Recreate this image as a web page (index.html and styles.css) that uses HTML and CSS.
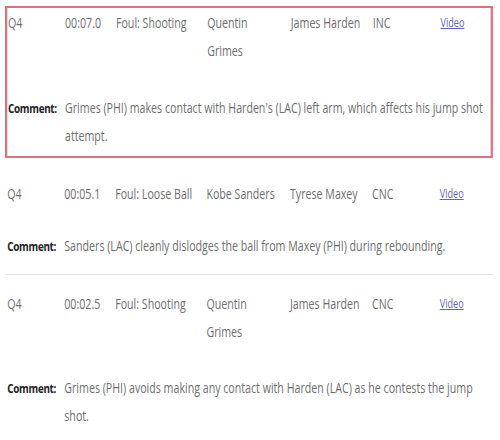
FILE: index.html
```html
<!DOCTYPE html>
<html>
<head>
<meta charset="utf-8">
<link rel="stylesheet" href="styles.css">
</head>
<body>
<div class="page">
<div class="list">
  <div class="entry entry-active">
    <div class="head">
      <span>Q4</span>
      <span>00:07.0</span>
      <span>Foul: Shooting</span>
      <span class="name">Quentin Grimes</span>
      <span>James Harden</span>
      <span>INC</span>
      <a class="video" href="#">Video</a>
    </div>
    <div class="comment">
      <span class="label">Comment:</span>
      <span class="text">Grimes (PHI) makes contact with Harden's (LAC) left arm, which affects his jump shot attempt.</span>
    </div>
  </div>
  <div class="entry entry-second">
    <div class="head">
      <span>Q4</span>
      <span>00:05.1</span>
      <span>Foul: Loose Ball</span>
      <span class="name">Kobe Sanders</span>
      <span>Tyrese Maxey</span>
      <span>CNC</span>
      <a class="video" href="#">Video</a>
    </div>
    <div class="comment">
      <span class="label">Comment:</span>
      <span class="text">Sanders (LAC) cleanly dislodges the ball from Maxey (PHI) during rebounding.</span>
    </div>
  </div>
  <div class="entry entry-third">
    <div class="head">
      <span>Q4</span>
      <span>00:02.5</span>
      <span>Foul: Shooting</span>
      <span class="name">Quentin Grimes</span>
      <span>James Harden</span>
      <span>CNC</span>
      <a class="video" href="#">Video</a>
    </div>
    <div class="comment">
      <span class="label">Comment:</span>
      <span class="text">Grimes (PHI) avoids making any contact with Harden (LAC) as he contests the jump shot.</span>
    </div>
  </div>
</div>
</div>
</body>
</html>
```
FILE: styles.css
```css
html, body {
  margin: 0;
  padding: 0;
  background: #ffffff;
}

body {
  font-family: "Open Sans", "Liberation Sans", sans-serif;
  font-size: 14px;
  line-height: 28px;
  color: #6e6e6e;
}

.page {
  width: 500px;
  overflow: hidden;
}

/* the reference is horizontally condensed: draw at full width, squeeze by 0.76 */
.list {
  display: flex;
  flex-direction: column;
  width: 642px;
  margin-left: 5px;
  transform: scaleX(0.76);
  transform-origin: 0 0;
}

.entry {
  display: flex;
  flex-direction: column;
  border: 2px solid transparent;
  padding-left: 1px;
}

.entry-active {
  margin-top: 6px;
  border-color: #d9737d;
  border-left-width: 3px;
  border-right-width: 3px;
  padding-top: 1px;
  padding-bottom: 6px;
  gap: 29px;
}

.entry-second {
  border-width: 0 0 1px 0;
  border-bottom-color: #e3e3e3;
  padding-left: 3px;
  padding-top: 22px;
  padding-bottom: 14px;
  gap: 24px;
}

.entry-third {
  border-width: 0;
  padding-left: 3px;
  padding-top: 15px;
  gap: 28px;
}

.head {
  display: grid;
  grid-template-columns: 75px 67px 120px 110px 108px 89px auto;
}

.name {
  padding-right: 13px;
}

.video {
  font-size: 12px;
  color: #6064bd;
  text-decoration: underline;
}

.comment {
  display: grid;
  grid-template-columns: 75px 1fr;
  padding-right: 2px;
}

.label {
  font-weight: bold;
  font-size: 13px;
  letter-spacing: -0.4px;
  color: #222222;
}
```
